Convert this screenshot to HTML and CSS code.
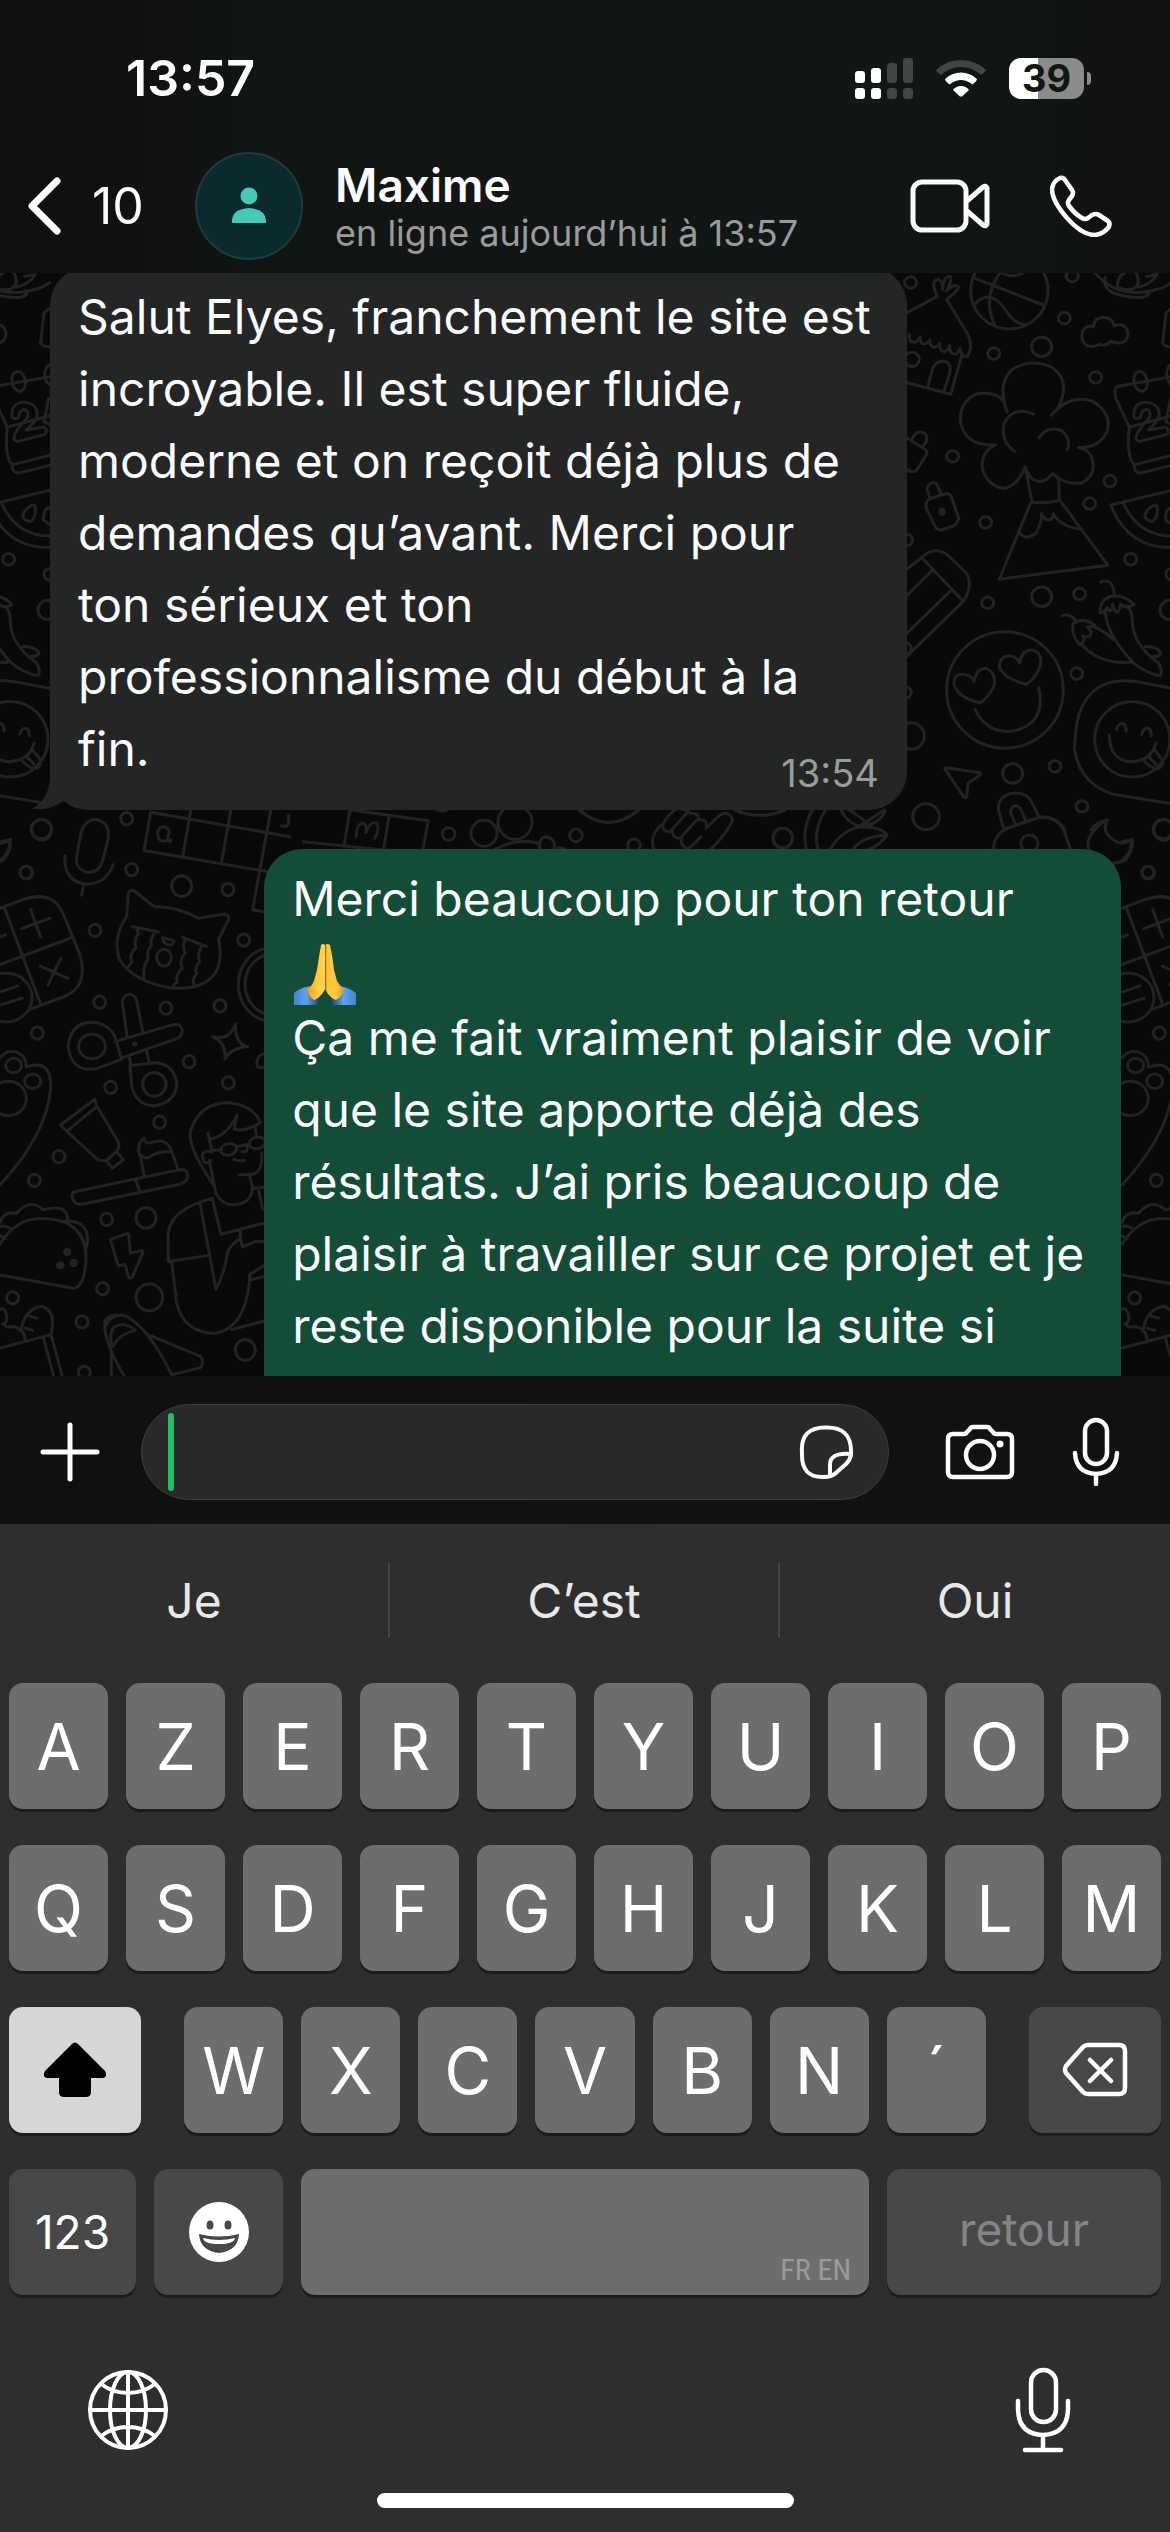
FILE: index.html
```html
<!DOCTYPE html>
<html lang="fr">
<head>
<meta charset="utf-8">
<meta name="viewport" content="width=device-width, initial-scale=1">
<title>Maxime</title>
<link rel="stylesheet" href="styles.css">
</head>
<body>
<div class="app">
  <header class="header">
    <div class="status">
      <time class="clock">13:57</time>
      <div class="indicators">
        <svg class="signal" width="58" height="41" viewBox="0 0 58 41" aria-hidden="true">
          <g fill="#fff"><rect y="13" width="10" height="12" rx="3"/><rect x="16" y="10" width="10" height="15" rx="3"/><rect y="30" width="10" height="11" rx="3"/><rect x="16" y="30" width="10" height="11" rx="3"/></g>
          <g fill="#414543"><rect x="32" y="5" width="10" height="20" rx="3"/><rect x="48" width="10" height="25" rx="3"/><rect x="32" y="30" width="10" height="11" rx="3"/><rect x="48" y="30" width="10" height="11" rx="3"/></g>
        </svg>
        <svg class="wifi" width="52" height="38" viewBox="0 0 52 38" aria-hidden="true">
          <path fill="#414543" d="M1 11Q11.500 1 26 1T51 11Q50.500 13 46 16Q37 8 26 8T6 16Q1.500 13 1 11Z"/>
          <path fill="#fff" d="M10 20Q17 13.500 26 13.500T42 20Q42 22 37.500 25.500Q32 21 26 21T14.500 25.500Q10 22 10 20Z"/>
          <path fill="#fff" d="M18 31Q21 27 26 27T34 31L27 37.500H25Z"/>
        </svg>
        <div class="battery"><span class="battery-level">39</span></div>
      </div>
    </div>
    <nav class="nav">
      <a class="back" href="#" aria-label="Retour, 10 discussions">
        <svg width="38" height="60" viewBox="0 0 38 60" fill="none" stroke="#fff" stroke-width="7" stroke-linecap="round" stroke-linejoin="round"><path d="M33 5L8 30L33 55"/></svg>
        <span>10</span>
      </a>
      <span class="avatar">
        <svg width="36" height="38" viewBox="0 0 36 38" fill="#45c9b9" aria-hidden="true"><circle cx="18" cy="9" r="8.500"/><path d="M1 36V33Q2 22 18 21Q34 22 35 33V36Z"/></svg>
      </span>
      <div class="contact">
        <h1 class="name">Maxime</h1>
        <p class="presence">en ligne aujourd’hui à 13:57</p>
      </div>
      <button class="icon-btn" aria-label="Appel vidéo">
        <svg width="80" height="54" viewBox="0 0 80 54" fill="none" stroke="#fafafa" stroke-width="5" stroke-linejoin="round"><rect x="3" y="3" width="53" height="48" rx="9"/><path d="M57 22L73 8Q76 6 77 9V45Q76 48 73 46L57 32"/></svg>
      </button>
      <button class="icon-btn" aria-label="Appel vocal">
        <svg width="62" height="62" viewBox="0 0 62 62" fill="none" stroke="#fafafa" stroke-width="4.600" stroke-linejoin="round"><path d="M10 3Q13 2 15 5L22 15Q24 18 22 21L19 25Q17 28 19 31Q25 39 32 43Q35 45 38 43L42 40Q46 38 49 40L58 46Q61 49 58 53Q53 59 45 60Q32 60 17 43Q2 26 2 14Q3 6 10 3Z"/></svg>
      </button>
    </nav>
  </header>

  <main class="chat">
    <svg class="wallpaper" viewBox="0 273 1170 1103" preserveAspectRatio="xMinYMin slice" aria-hidden="true">
      <defs>
        <ellipse id="dot" rx="18" ry="16"/>
        <ellipse id="ring" rx="30" ry="27"/>
      </defs>
      <g id="doodles">
        <g transform="translate(880 270) scale(.3333 .3571)">
          <use href="#dot" x="92" y="35"/><use href="#dot" x="577" y="17"/><use href="#dot" x="553" y="135"/><use href="#dot" x="341" y="234"/><use href="#dot" x="647" y="301"/><use href="#dot" x="218" y="522"/><use href="#dot" x="690" y="591"/><use href="#dot" x="629" y="654"/><use href="#dot" x="317" y="707"/><use href="#dot" x="752" y="810"/><use href="#dot" x="323" y="932"/><use href="#dot" x="599" y="907"/><use href="#dot" x="590" y="1130"/><use href="#dot" x="525" y="1390"/><use href="#dot" x="606" y="1502"/><use href="#dot" x="80" y="756"/><use href="#dot" x="76" y="1183"/><use href="#dot" x="76" y="1060"/><use href="#dot" x="876" y="852"/>
          <use href="#ring" x="485" y="215"/><use href="#ring" x="485" y="915"/><use href="#ring" x="398" y="1410"/><use href="#ring" x="870" y="952"/><use href="#ring" x="850" y="1566"/>
          <ellipse cx="93" cy="1305" rx="40" ry="37"/><ellipse cx="138" cy="1531" rx="40" ry="36"/>
          <path d="M80 120L172 74Q150 30 175 26Q190 30 188 55Q190 15 212 18Q216 30 200 58Q225 35 236 48Q228 65 200 82L262 178Q282 215 262 242Q245 245 240 220Q232 242 214 232Q208 225 209 212Q202 235 184 225Q178 218 179 205Q170 222 154 212Q148 205 150 195Q140 212 124 204Q118 198 120 188Q108 208 93 200Q88 195 88 180M245 240L212 348L80 315M143 328L158 275Q172 250 200 257Q213 265 210 285L192 340"/>
          <ellipse cx="96" cy="250" rx="22" ry="20"/>
          <ellipse cx="388" cy="58" rx="116" ry="107"/><path d="M282 22L490 98M360 8Q305 80 345 155M285 95Q330 50 375 110Q405 155 440 153M365 8Q400 24 430 8"/>
          <path d="M645 8Q700 70 790 62Q850 55 875 35M675 20Q670 50 695 62Q740 80 790 76Q808 72 808 60M712 50Q712 15 735 8M768 8Q785 40 760 52Q740 60 720 50M775 48Q815 40 832 12L800 18"/>
          <path d="M640 158Q645 132 670 132Q698 133 702 156Q740 145 744 180Q740 212 698 202Q690 195 685 207Q670 213 660 208Q620 225 607 195Q600 155 640 158ZM875 108L858 120L848 205Q855 215 875 215"/>
          <path d="M382 398Q350 320 395 280Q450 245 515 272Q575 310 535 385L514 407Q570 345 640 368Q700 405 680 455Q655 500 594 497Q620 500 633 520Q655 570 608 595Q560 605 518 570Q500 592 478 592Q448 590 436 552Q410 608 370 611Q325 605 308 560Q300 510 347 489Q260 495 242 430Q235 370 290 347Q345 338 370 366M460 403Q400 380 372 430Q360 480 404 508M478 470Q500 435 545 450Q575 475 562 504M438 560L456 650Q500 655 538 645L536 585M452 652L358 866L684 827L538 643M418 735Q440 760 470 735Q485 705 485 682Q494 702 505 700Q518 700 520 683Q540 718 602 726"/>
          <path d="M875 299L712 326Q700 335 708 360L748 440L875 408M748 440Q738 530 765 545L875 519M762 545Q762 570 785 568L875 547"/>
          <ellipse cx="782" cy="312" rx="20" ry="28" transform="rotate(-14 782 312)"/><ellipse cx="880" cy="293" rx="20" ry="28"/>
          <path d="M762 412Q758 372 798 370Q845 376 836 412Q828 430 805 448L858 440Q870 447 862 460L780 480Q763 478 770 462Q780 440 805 418Q818 398 800 390Q784 392 782 412Q772 420 762 412ZM872 360L858 425L875 432"/>
          <path d="M875 617L692 658Q745 780 875 777M730 652Q775 745 875 745M830 658Q838 690 818 704Q790 700 796 682Q810 658 830 658ZM875 665Q855 668 857 700L875 712"/>
          <path d="M80 470L135 502Q145 510 138 520L110 560Q95 570 80 558M97 472Q110 445 135 458Q150 475 125 497M150 640L200 626Q212 628 216 640L236 695Q232 712 220 717L185 728Q170 730 162 712L138 665Q136 648 150 640L141 612Q148 590 170 598L184 628"/>
          <ellipse class="solid" cx="186" cy="677" rx="7" ry="7"/>
          <path d="M80 838L125 805Q165 770 205 800L260 850Q280 885 250 928L80 1082M125 805L250 928M80 912L155 843M212 898L80 1018"/>
          <ellipse cx="375" cy="1176" rx="175" ry="163"/><path d="M302 1212Q235 1200 222 1160Q220 1130 250 1132Q275 1135 282 1152Q290 1112 320 1116Q350 1130 342 1165Q330 1190 302 1212ZM440 1160Q370 1145 358 1110Q360 1080 390 1080Q410 1082 419 1100Q425 1062 458 1064Q490 1075 480 1110Q470 1140 440 1160ZM285 1230Q320 1300 400 1291Q500 1270 476 1170"/>
          <path d="M662 874Q700 860 703 912M660 960Q660 915 705 912Q745 915 762 938Q735 950 722 935Q718 958 710 958Q702 955 698 935Q698 955 688 955L682 945Q675 960 660 960M677 962Q680 1020 760 1100Q800 1130 840 1136Q850 1125 835 1100Q760 1050 757 985Q758 960 745 945M547 968Q570 960 590 985M600 1050Q570 1020 580 990Q610 970 645 995Q640 1000 622 1000Q640 1015 630 1025Q620 1030 608 1024Q620 1035 600 1050ZM645 1000Q680 1015 700 1035M606 1050Q660 1105 755 1098M795 1054Q840 1055 842 1075Q835 1085 820 1082"/>
          <ellipse cx="757" cy="1314" rx="113" ry="106"/><path d="M875 1171L765 1152Q620 1135 590 1270L583 1340Q600 1440 700 1468L875 1495M709 1288Q714 1268 730 1270Q740 1278 738 1292M785 1300Q792 1280 806 1284Q815 1290 814 1304M688 1302Q688 1370 750 1377Q815 1375 828 1325M792 1374Q815 1398 835 1396Q852 1388 846 1370L825 1346M805 1362L828 1384"/>
          <path d="M195 1398Q192 1392 200 1394L300 1408Q306 1411 300 1414L264 1437L260 1474Q256 1482 250 1474ZM372 1568L355 1510Q355 1470 400 1465Q440 1462 455 1490L478 1532L375 1565M408 1555L392 1520Q392 1500 408 1500Q420 1502 425 1515L438 1545M478 1532Q530 1528 555 1568M632 1568Q650 1545 682 1541Q675 1555 676 1568"/>
        </g>
        <g transform="translate(0 790) scale(.3333 .3827)">
          <use href="#dot" x="380" y="75"/><use href="#dot" x="78" y="215"/><use href="#dot" x="395" y="208"/><use href="#dot" x="684" y="260"/><use href="#dot" x="285" y="367"/><use href="#dot" x="731" y="392"/><use href="#dot" x="299" y="554"/><use href="#dot" x="498" y="570"/><use href="#dot" x="660" y="564"/><use href="#dot" x="112" y="635"/><use href="#dot" x="567" y="710"/><use href="#dot" x="685" y="765"/><use href="#dot" x="332" y="777"/><use href="#dot" x="479" y="868"/><use href="#dot" x="177" y="958"/><use href="#dot" x="103" y="1020"/><use href="#dot" x="320" y="1122"/><use href="#dot" x="308" y="1303"/><use href="#dot" x="38" y="1327"/><use href="#dot" x="246" y="1390"/><use href="#dot" x="253" y="1522"/>
          <use href="#ring" x="125" y="104"/><use href="#ring" x="545" y="251"/><use href="#ring" x="438" y="1118"/><use href="#ring" x="736" y="1463"/><ellipse cx="448" cy="1326" rx="40" ry="35"/>
          <path d="M242 115Q255 75 290 77Q330 85 325 125L308 185Q295 220 260 215Q225 205 230 175ZM195 172Q190 240 260 246Q320 245 339 195M251 247L245 275M0 136L30 129Q30 165 0 184"/>
          <path d="M870 122L452 58L432 158L800 213M572 55L548 175M692 55L664 192M812 55L758 313L790 318M505 128Q490 140 477 128Q468 110 480 98Q500 92 508 108L502 130Q508 138 513 131M845 94Q866 98 866 85V65"/>
          <path d="M0 309L70 286Q160 260 190 325L240 430Q265 510 200 537L90 573M15 312L120 555M0 456L214 386M92 312L122 384M65 362L150 335M121 460L204 492M182 440L144 510M0 384L16 379"/>
          <ellipse cx="18" cy="542" rx="78" ry="64"/><path d="M0 528L54 512M0 562L67 544"/>
          <path d="M380 330L385 270Q392 258 403 264L463 305Q530 303 595 335L675 324Q690 328 685 340L656 390Q670 450 640 485Q600 525 510 517Q400 500 360 445Q335 390 380 330ZM397 357L477 371M548 385L620 409M410 362L415 375Q400 395 408 412Q385 430 396 450L380 466M465 372Q448 390 455 405Q438 420 445 440Q428 460 432 492M556 390Q545 405 556 425Q535 445 547 465Q525 485 532 500L520 512M605 408Q592 430 598 450Q582 465 590 480Q575 495 582 508M487 386L520 393Q524 400 512 405Q490 405 487 386Z"/><ellipse cx="492" cy="438" rx="22" ry="22"/>
          <ellipse cx="815" cy="508" rx="100" ry="96"/><ellipse cx="815" cy="508" rx="80" ry="78"/>
          <ellipse cx="276" cy="670" rx="40" ry="32"/><ellipse cx="463" cy="769" rx="35" ry="31"/>
          <path d="M365 704L290 728Q215 740 204 670Q215 600 290 608Q330 615 345 645ZM345 657L520 613Q545 610 547 630Q545 645 530 650L365 700M381 643L367 555Q370 535 388 534Q405 535 410 550L428 631M390 720L395 775Q410 825 465 825Q530 815 530 765Q520 715 465 713ZM388 698L392 718M440 682L448 712"/>
          <ellipse class="solid" cx="404" cy="664" rx="4" ry="3"/>
          <path d="M638 645Q690 655 706 612Q705 665 743 670Q690 675 675 703Q680 660 638 645ZM790 690L778 695Q765 715 775 725H790"/>
          <ellipse cx="41" cy="720" rx="24" ry="19"/><ellipse cx="98" cy="761" rx="24" ry="19"/><ellipse cx="25" cy="806" rx="54" ry="45"/><path d="M0 700Q20 678 50 685Q80 695 79 724Q155 700 152 780Q140 900 0 1032"/>
          <path d="M181 876L284 808L290 825L355 920Q360 932 352 942L325 965Q310 972 292 965ZM205 888L290 828M318 968L350 945L370 966L337 988ZM433 1010L422 960Q405 930 432 909Q435 925 450 922Q500 905 516 945L533 990M425 955Q440 968 455 955Q490 940 516 946M216 1060Q215 1050 235 1048L540 992Q565 990 563 1010Q560 1025 540 1030L260 1080Q220 1090 216 1060ZM407 1020L420 1050"/>
          <path d="M643 1035Q560 930 572 890Q600 815 690 817Q760 825 781 868Q740 895 703 886L711 850Q680 905 630 912M624 897L637 945M637 942L665 940M710 932L748 925M632 968Q610 985 607 955Q610 940 635 945M628 968L648 1055Q670 1085 700 1084Q760 1080 757 1035L748 1005Q790 1005 785 950M765 880L770 905M725 945Q745 950 742 930M702 965Q715 970 733 968M718 1006L748 1004M757 1042L790 1038M775 1042L788 1095"/>
          <ellipse cx="686" cy="939" rx="24" ry="15" transform="rotate(-8 686 939)"/><ellipse cx="772" cy="922" rx="24" ry="15" transform="rotate(-8 772 922)"/>
          <path d="M637 1067Q510 1095 505 1160L504 1232L628 1216M600 1080L648 1305Q675 1260 682 1210Q690 1190 720 1172M637 1067L663 1161L790 1132M725 1145Q715 1165 728 1194L765 1180L790 1180M515 1232L530 1340Q550 1415 640 1420Q740 1410 750 1265L790 1244M750 1280L790 1272M695 1410L790 1388"/>
          <path d="M0 1130Q10 1100 50 1106Q90 1065 130 1097Q200 1080 203 1120M0 1186Q50 1120 120 1120Q270 1120 257 1240Q250 1300 220 1302L0 1267M185 1127Q265 1120 263 1180L255 1205M0 1140Q15 1138 30 1145M0 1165L15 1172"/>
          <ellipse class="solid" cx="202" cy="1207" rx="8" ry="7"/><ellipse class="solid" cx="181" cy="1242" rx="8" ry="7"/><ellipse class="solid" cx="221" cy="1236" rx="8" ry="7"/>
          <path d="M331 1175L380 1159Q388 1160 387 1170L391 1210L425 1204Q430 1206 427 1212L398 1270Q390 1280 384 1270L376 1240L355 1243Z"/>
          <path d="M0 1458L153 1423Q170 1360 125 1349Q75 1355 63 1411Q75 1420 75 1438M0 1357Q15 1350 20 1375Q22 1395 8 1395L20 1403Q55 1400 65 1415M85 1374L110 1380M75 1406L98 1412M130 1430L162 1535M153 1423L188 1535M375 1535Q310 1440 314 1390Q325 1365 380 1375Q450 1410 515 1528L600 1510Q615 1498 602 1480L440 1422M334 1470V1535M338 1454Q325 1425 340 1405Q370 1385 406 1412Q360 1420 338 1454ZM316 1400Q330 1375 365 1372"/>
        </g>
        <g transform="translate(270 780) scale(.3333)">
          <circle cx="536" cy="162" r="19"/><circle cx="918" cy="166" r="19"/><circle cx="1092" cy="196" r="19"/><circle cx="642" cy="160" r="39"/><circle cx="735" cy="127" r="51"/><circle cx="1539" cy="174" r="29"/>
          <path d="M245 90L475 122L458 210M240 90L222 198M358 105L340 210M100 185L340 210M258 170Q260 130 280 130Q292 135 288 158Q298 125 320 128Q330 150 314 175M498 88Q515 98 535 88M928 90Q1015 165 1106 90M1395 90Q1470 122 1545 90M675 208Q750 170 810 192M810 208Q805 170 830 170Q858 175 852 208Q870 198 885 208M1152 210Q1135 165 1180 130Q1200 95 1225 85Q1250 88 1262 100Q1290 100 1285 120Q1315 115 1308 145L1350 105Q1375 90 1388 118Q1380 150 1322 208M1180 130Q1175 155 1200 155L1250 100M1208 150Q1205 175 1230 175L1285 115M1238 165Q1225 190 1250 205Q1270 200 1292 170"/>
        </g>
        <g transform="translate(270 800) scale(.574 .3333)">
          <ellipse cx="893" cy="114" rx="17" ry="29"/><ellipse cx="1323" cy="130" rx="15" ry="25"/><ellipse cx="1530" cy="218" rx="11" ry="19"/>
          <path d="M945 30Q925 90 935 150M968 30Q945 90 955 150M995 30Q1005 70 1030 80Q1065 70 1072 30M1010 30L1050 80M1030 75L1070 30M975 150Q1000 80 1035 80Q1070 85 1075 105Q1060 140 1040 150M1015 150Q1030 110 1075 105M1260 150Q1262 100 1285 85L1340 52Q1375 50 1385 100L1395 150M1456 60Q1415 110 1428 160Q1450 210 1490 180Q1505 150 1502 118Q1485 140 1470 120Q1450 100 1456 60Z"/>
        </g>
      </g>
      <use href="#doodles" x="-1122"/>
      <use href="#doodles" x="1122"/>
    </svg>

    <article class="bubble received">
      <svg class="tail" width="44" height="44" viewBox="0 0 44 44" aria-hidden="true"><path fill="#242625" d="M18 0V10Q18 32 0 43Q16 45 30 36L44 30V0Z"/></svg>
      <p>Salut Elyes, franchement le site est<br>incroyable. Il est super fluide,<br>moderne et on reçoit déjà plus de<br>demandes qu’avant. Merci pour<br>ton sérieux et ton<br>professionnalisme du début à la<br>fin.</p>
      <time class="stamp">13:54</time>
    </article>

    <article class="bubble sent">
      <p>Merci beaucoup pour ton retour</p>
      <svg class="emoji" width="66" height="67" viewBox="0 -4 66 67" role="img" aria-label="Mains jointes">
        <defs>
          <linearGradient id="skin" x1="0" x2="1" y1="0" y2="0"><stop offset="0" stop-color="#f09a1a"/><stop offset=".25" stop-color="#ffc83a"/><stop offset=".48" stop-color="#ffd75a"/><stop offset=".5" stop-color="#b86a0c"/><stop offset=".54" stop-color="#ffc53a"/><stop offset=".78" stop-color="#ffc83a"/><stop offset="1" stop-color="#ee9718"/></linearGradient>
          <linearGradient id="cuff" x1="0" x2="1" y1="0" y2="0"><stop offset="0" stop-color="#3f86d6"/><stop offset=".2" stop-color="#62a2ea"/><stop offset=".42" stop-color="#123a6a"/><stop offset=".58" stop-color="#123a6a"/><stop offset=".8" stop-color="#62a2ea"/><stop offset="1" stop-color="#3f86d6"/></linearGradient>
        </defs>
        <path fill="url(#cuff)" d="M2 54Q8 49 18 47L30 58L24 66H2ZM64 54Q58 49 48 47L36 58L42 66H64Z"/>
        <path fill="url(#skin)" d="M29 6Q31 4 33 6Q35 4 38 6Q41 20 42 31L45 42Q48 47 52 50Q50 58 44 61Q38 59 34 52L33 50L32 52Q28 59 22 61Q17 58 15 50Q20 47 22 42L25 31Q27 18 29 6Z"/>
      </svg>
      <p>Ça me fait vraiment plaisir de voir<br>que le site apporte déjà des<br>résultats. J’ai pris beaucoup de<br>plaisir à travailler sur ce projet et je<br>reste disponible pour la suite si</p>
    </article>
  </main>

  <form class="composer">
    <button type="button" class="icon-btn" aria-label="Joindre">
      <svg width="60" height="60" viewBox="0 0 60 60" stroke="#fafafa" stroke-width="5" stroke-linecap="round"><path d="M30 3V57M3 30H57"/></svg>
    </button>
    <div class="field">
      <span class="caret"></span>
      <input class="message" type="text" aria-label="Message">
      <button type="button" class="icon-btn" aria-label="Autocollants">
        <svg width="55" height="55" viewBox="0 0 55 55" fill="none" stroke="#fafafa" stroke-width="4" stroke-linejoin="round"><path d="M27 2.500Q52 2 52 26V30Q51 35 47 39L38 47Q33 52 25 52Q2 53 3 28Q1 2 27 2.500ZM52 29Q30 27 31 41V51"/></svg>
      </button>
    </div>
    <button type="button" class="icon-btn" aria-label="Appareil photo">
      <svg width="70" height="56" viewBox="0 0 70 56" fill="none" stroke="#fafafa" stroke-width="4.500" stroke-linejoin="round"><path d="M8 10H19Q21 10 22 8L25 5Q26 3 28 3H42Q44 3 45 5L48 8Q49 10 51 10H62Q67 10 67 15V48Q67 53 62 53H8Q3 53 3 48V15Q3 10 8 10Z"/><circle cx="35" cy="31" r="14"/><circle cx="55" cy="20" r="3.500" fill="#fafafa" stroke="none"/></svg>
    </button>
    <button type="button" class="icon-btn" aria-label="Message vocal">
      <svg width="48" height="70" viewBox="0 0 48 70" fill="none" stroke="#fafafa" stroke-width="4.500" stroke-linecap="round"><rect x="13" y="3" width="22" height="44" rx="11"/><path d="M3 36Q4 56 24 57Q44 56 45 36M24 57V67"/></svg>
    </button>
  </form>

  <section class="keyboard" aria-label="Clavier">
    <div class="suggestions">
      <button>Je</button><button>C’est</button><button>Oui</button>
    </div>
    <div class="keys">
      <div class="row">
        <button class="key">A</button><button class="key">Z</button><button class="key">E</button><button class="key">R</button><button class="key">T</button><button class="key">Y</button><button class="key">U</button><button class="key">I</button><button class="key">O</button><button class="key">P</button>
      </div>
      <div class="row">
        <button class="key">Q</button><button class="key">S</button><button class="key">D</button><button class="key">F</button><button class="key">G</button><button class="key">H</button><button class="key">J</button><button class="key">K</button><button class="key">L</button><button class="key">M</button>
      </div>
      <div class="row row-shift">
        <button class="key shift" aria-label="Majuscule">
          <svg width="64" height="56" viewBox="0 0 64 56"><path d="M29 2Q32 -1 35 2L62 29Q65 35 60 36H48V50Q48 55 43 55H21Q16 55 16 50V36H4Q-1 35 2 29Z"/></svg>
        </button>
        <div class="letters">
          <button class="key">W</button><button class="key">X</button><button class="key">C</button><button class="key">V</button><button class="key">B</button><button class="key">N</button><button class="key">´</button>
        </div>
        <button class="key dark" aria-label="Effacer">
          <svg width="66" height="56" viewBox="0 0 66 56" fill="none" stroke="#fff" stroke-width="4.500" stroke-linecap="round" stroke-linejoin="round"><path d="M26 3H57Q63 3 63 9V46Q63 52 57 52H26Q23 52 21 50L4 31Q2 28 4 24L21 5Q23 3 26 3ZM28 18L49 39M49 18L28 39"/></svg>
        </button>
      </div>
      <div class="row row-space">
        <button class="key dark numbers">123</button>
        <button class="key dark" aria-label="Emoji">
          <svg width="60" height="60" viewBox="0 0 60 60"><circle cx="30" cy="30" r="30" fill="#fff"/><g fill="#484848"><ellipse cx="21" cy="23" rx="3.500" ry="4.500"/><ellipse cx="39" cy="23" rx="3.500" ry="4.500"/><path d="M10 32Q30 37 50 32Q49 49 30 51Q11 49 10 32Z"/></g><path fill="#fff" d="M14 36Q30 40 46 36Q45 42 30 42T14 36Z"/></svg>
        </button>
        <button class="key space">FR EN</button>
        <button class="key dark return">retour</button>
      </div>
    </div>
    <div class="tools">
      <button class="icon-btn" aria-label="Changer de clavier">
        <svg width="82" height="82" viewBox="0 0 82 82" fill="none" stroke="#fff" stroke-width="4"><circle cx="41" cy="41" r="38"/><ellipse cx="41" cy="41" rx="18" ry="38"/><path d="M41 3V79M3 41H79M14 15Q26 24 41 24T68 15M14 67Q26 58 41 58T68 67"/></svg>
      </button>
      <button class="icon-btn" aria-label="Dictée">
        <svg width="56" height="86" viewBox="0 0 56 86" fill="none" stroke="#fff" stroke-width="4.500" stroke-linecap="round"><rect x="16" y="3" width="25" height="52" rx="12.500"/><path d="M3 34V43Q4 67 28 68Q52 67 53 43V34M28 68V83M10 83H46"/></svg>
      </button>
    </div>
    <div class="home-indicator"></div>
  </section>
</div>
</body>
</html>
```
FILE: styles.css
```css
* {
  box-sizing: border-box;
}

body {
  margin: 0;
  background: #2e2e2e;
  color: #fafafa;
  font-family: Inter, Roboto, "Liberation Sans", sans-serif;
}

h1,
p {
  margin: 0;
}

svg {
  display: block;
  flex: none;
}

button,
input {
  margin: 0;
  padding: 0;
  border: 0;
  background: none;
  color: inherit;
  font: inherit;
}

.app {
  display: flex;
  flex-direction: column;
  height: 100vh;
}

/* Header */

.header {
  flex: none;
  background: linear-gradient(90deg, #0f0f0f, #111615 28%, #111716 75%, #101211);
}

.status {
  display: flex;
  justify-content: space-between;
  align-items: center;
  padding: 48px 86px 30px 126px;
  line-height: 60px;
}

.clock {
  font-size: 50px;
  font-weight: 600;
  color: #fff;
}

.indicators {
  display: flex;
  align-items: center;
  gap: 22px;
}

.battery {
  position: relative;
  width: 75px;
  height: 41px;
  border-radius: 12px;
  background: linear-gradient(90deg, #fff 39%, #8a8c8b 39%);
  color: #121716;
  font-size: 38px;
  font-weight: 700;
  line-height: 41px;
  text-align: center;
}

.battery::after {
  content: "";
  position: absolute;
  top: 14px;
  right: -7px;
  width: 4px;
  height: 13px;
  border-radius: 0 6px 6px 0;
  background: #8a8c8b;
}

.nav {
  display: flex;
  align-items: center;
  height: 135px;
  padding: 0 58px 0 24px;
}

.back {
  display: flex;
  align-items: center;
  gap: 30px;
  width: 171px;
  color: inherit;
  font-size: 50px;
  text-decoration: none;
}

.avatar {
  display: grid;
  place-items: center;
  width: 108px;
  height: 108px;
  border: 2px solid #1b3c40;
  border-radius: 50%;
  background: #0a2a2d;
}

.contact {
  flex: 1;
  padding-left: 32px;
  white-space: nowrap;
}

.name {
  font-size: 46px;
  font-weight: 600;
  line-height: 54px;
}

.presence {
  color: #9a9c9b;
  font-size: 36px;
  line-height: 42px;
}

.icon-btn {
  flex: none;
}

.nav .icon-btn + .icon-btn {
  margin-left: 60px;
}

/* Conversation */

.chat {
  position: relative;
  display: flex;
  flex: 1;
  flex-direction: column;
  min-height: 0;
  padding: 0 49px 0 50px;
  overflow: hidden;
  background: #090909;
}

.wallpaper {
  position: absolute;
  inset: 0;
  width: 100%;
  height: 100%;
  fill: none;
  stroke: #232323;
  stroke-linecap: round;
  stroke-linejoin: round;
}

.wallpaper * {
  stroke-width: 3px;
  vector-effect: non-scaling-stroke;
}

.wallpaper .solid {
  fill: #232323;
}

.bubble {
  position: relative;
  flex: none;
  width: 80%;
  border-radius: 38px;
  font-size: 48px;
  line-height: 72px;
  white-space: nowrap;
}

.received {
  align-self: flex-start;
  margin-top: -6px;
  padding: 14px 28px 25px;
  background: #242625;
}

.sent {
  align-self: flex-end;
  margin-top: 39px;
  padding: 14px 28px 96px;
  background: #144d37;
}

.emoji {
  overflow: visible;
}

.tail {
  position: absolute;
  bottom: 0;
  left: -18px;
}

.stamp {
  position: absolute;
  right: 28px;
  bottom: 16px;
  color: #9b9d9c;
  font-size: 38px;
  line-height: 42px;
}

/* Composer */

.composer {
  display: flex;
  flex: none;
  align-items: center;
  margin: 0;
  padding: 28px 50px 24px 40px;
  background: linear-gradient(90deg, #0f0f0f, #101312 50%, #101211);
}

.field {
  display: flex;
  flex: 1;
  align-items: center;
  min-width: 0;
  height: 96px;
  margin: 0 56px 0 41px;
  padding: 0 34px 0 26px;
  border: 1px solid #3b3d3c;
  border-radius: 48px;
  background: #282a29;
}

.caret {
  flex: none;
  width: 6px;
  height: 78px;
  border-radius: 3px;
  background: #23c063;
}

.message {
  flex: 1;
  min-width: 0;
  font-size: 48px;
  outline: none;
}

.composer > .icon-btn:last-child {
  margin-left: 57px;
}

/* Keyboard */

.keyboard {
  flex: none;
  padding-bottom: 24px;
  background: #2e2e2e;
}

.suggestions {
  display: grid;
  grid-template-columns: repeat(3, 1fr);
  padding: 39px 0 45px;
}

.suggestions button {
  height: 75px;
  border-right: 2px solid #464646;
  color: #e8e8e8;
  font-size: 48px;
}

.suggestions button:last-child {
  border-right: 0;
}

.keys {
  display: grid;
  gap: 36px;
  padding: 0 9px;
}

.row {
  display: grid;
  grid-template-columns: repeat(10, 1fr);
  gap: 18px;
}

.row-shift {
  grid-template-columns: 132fr 801fr 132fr;
  gap: 43px;
}

.row-space {
  grid-template-columns: 127fr 129fr 568fr 274fr;
}

.letters {
  display: grid;
  grid-template-columns: repeat(7, 1fr);
  gap: 18px;
}

.key {
  display: grid;
  place-items: center;
  min-width: 0;
  height: 126px;
  border-radius: 14px;
  background: #6d6d6d;
  box-shadow: 0 3px 0 #1c1c1c;
  color: #fff;
  font-size: 64px;
}

.shift {
  background: #d6d6d6;
}

.dark {
  background: #484848;
}

.numbers {
  font-size: 46px;
}

.space {
  place-items: end;
  padding: 0 18px 8px;
  color: #9b9b9b;
  font-family: "Liberation Sans Narrow", "Roboto Condensed", Roboto, sans-serif;
  font-size: 30px;
}

.return {
  padding-bottom: 6px;
  color: #858585;
  font-size: 46px;
}

.tools {
  display: flex;
  justify-content: space-between;
  align-items: center;
  padding: 72px 99px 40px 87px;
}

.home-indicator {
  width: 417px;
  height: 15px;
  margin: 0 auto;
  border-radius: 8px;
  background: #fff;
}
```
